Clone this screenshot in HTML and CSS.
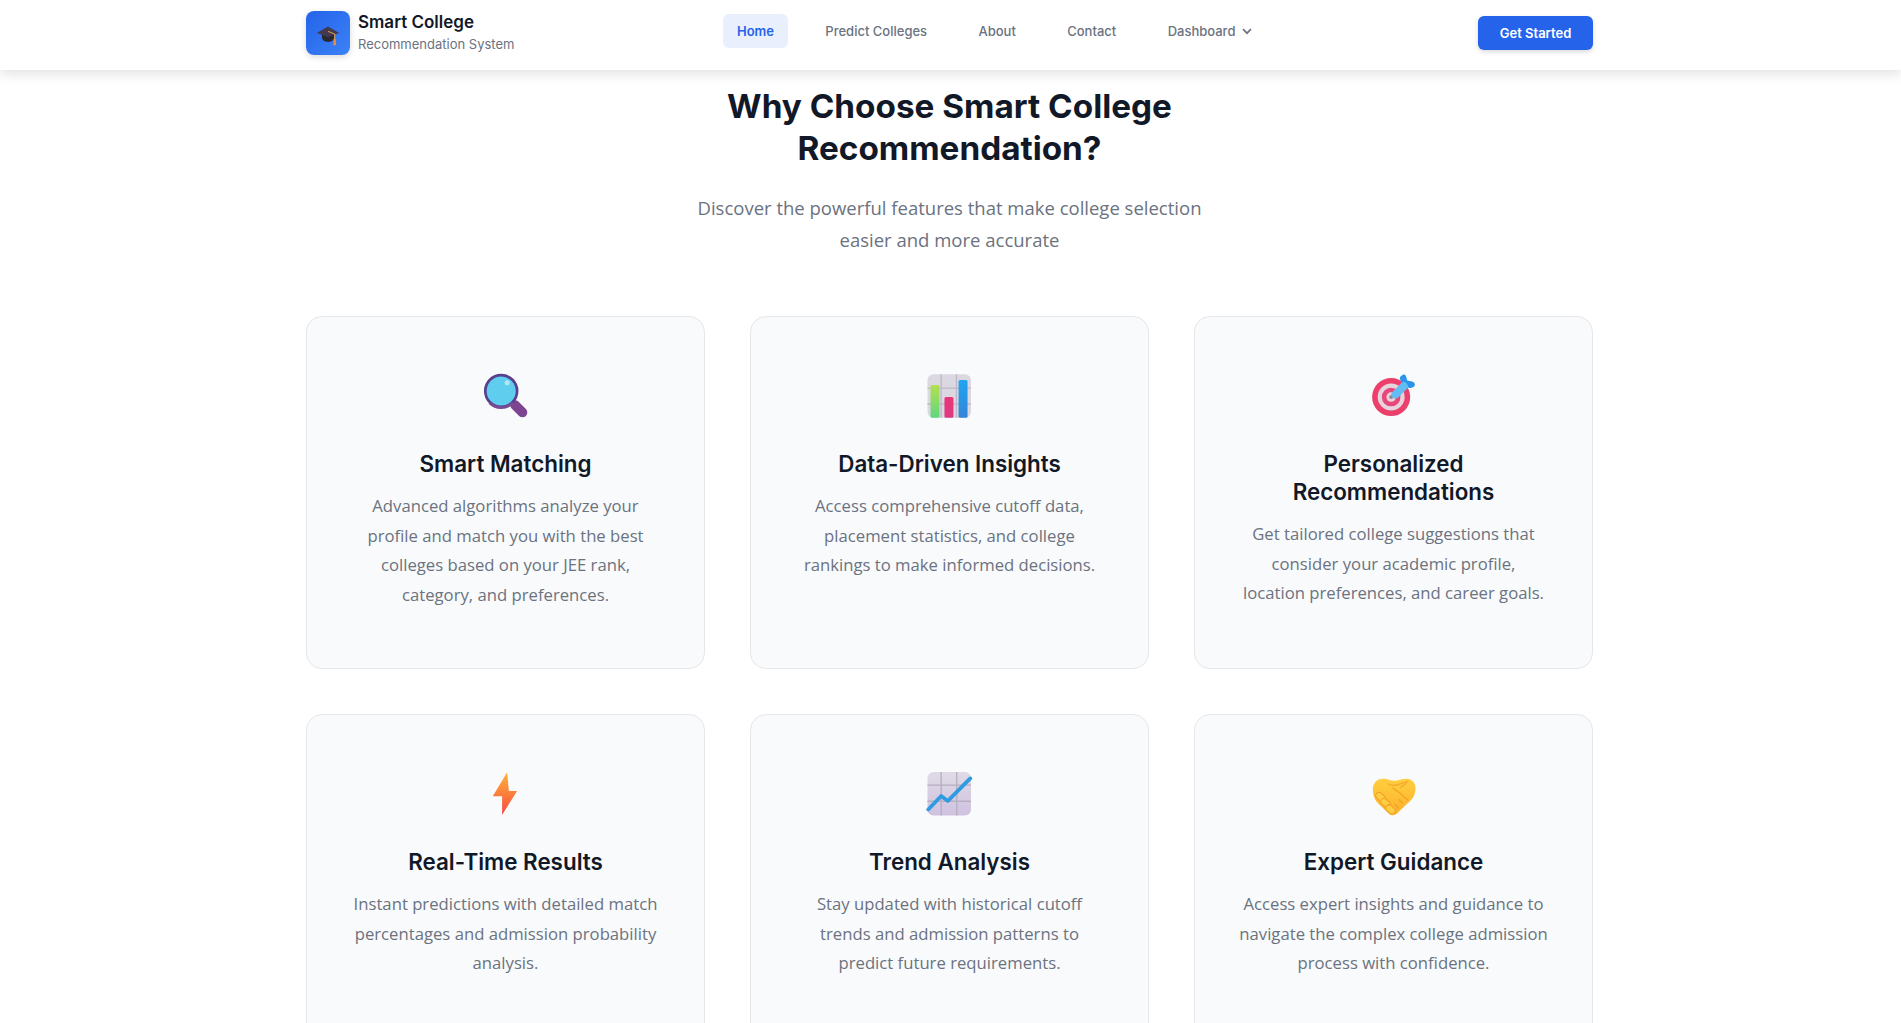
FILE: index.html
```html
<!DOCTYPE html>
<html lang="en">
<head>
    <meta charset="UTF-8">
    <meta name="viewport" content="width=device-width, initial-scale=1.0">
    <title>Smart College Recommendation System</title>
    <link rel="stylesheet" href="styles.css">
</head>
<body>
    <!-- Top navigation -->
    <header class="navbar">
        <div class="navbar-inner">
            <a class="brand" href="#">
                <span class="brand-logo">
                    <svg class="brand-cap" viewBox="0 0 32 32">
                        <path d="M8 14h16v7c0 3-3.500 5.500-8 5.500S8 24 8 21z" fill="#2b2733"/>
                        <path d="M16 6 31 14.500 16 20 1 14.500z" fill="#433a52"/>
                        <path d="M16 12.500 25 16v7" fill="none" stroke="#e8a33d" stroke-width="1.300"/>
                        <path d="M23.700 22.500h2.600l.7 8.500h-4z" fill="#f08a3c"/>
                    </svg>
                </span>
                <span class="brand-text">
                    <span class="brand-name">Smart College</span>
                    <span class="brand-sub">Recommendation System</span>
                </span>
            </a>
            <nav class="nav-links">
                <a class="nav-link active" href="#">Home</a>
                <a class="nav-link" href="#">Predict Colleges</a>
                <a class="nav-link" href="#">About</a>
                <a class="nav-link" href="#">Contact</a>
                <a class="nav-link" href="#">Dashboard
                    <svg class="chevron" viewBox="0 0 12 12"><path d="M2 4.200 6 8.200l4-4" fill="none" stroke="currentColor" stroke-width="1.700"/></svg>
                </a>
            </nav>
            <button class="btn-start">Get Started</button>
        </div>
    </header>

    <main class="features">
        <div class="features-head">
            <h1>Why Choose Smart College Recommendation?</h1>
            <p>Discover the powerful features that make college selection easier and more accurate</p>
        </div>

        <div class="feature-grid">
            <article class="feature-card">
                <svg class="feature-icon" viewBox="0 0 32 32">
                    <path d="M22 22 27 27" stroke="#7d4490" stroke-width="6.400" stroke-linecap="round"/>
                    <circle cx="12.800" cy="12.700" r="10.600" fill="#5fcdee" stroke="#59408f" stroke-width="1.800"/>
                    <path d="M5 20.500a10.800 10.800 0 0 0 15.500 0" fill="none" stroke="#7a4a94" stroke-width="1.800"/>
                    <circle cx="16.800" cy="7.200" r="1.700" fill="#b6e6f6"/>
                </svg>
                <h3>Smart Matching</h3>
                <p>Advanced algorithms analyze your profile and match you with the best colleges based on your JEE rank, category, and preferences.</p>
            </article>

            <article class="feature-card">
                <svg class="feature-icon" viewBox="0 0 32 32">
                    <defs>
                        <linearGradient id="greenBar" x1="0" y1="0" x2="0" y2="1"><stop offset="0" stop-color="#b4e04e"/><stop offset="1" stop-color="#5fd67f"/></linearGradient>
                        <linearGradient id="pinkBar" x1="0" y1="0" x2="0" y2="1"><stop offset="0" stop-color="#e9357a"/><stop offset="1" stop-color="#df3a80"/></linearGradient>
                        <linearGradient id="blueBar" x1="0" y1="0" x2="0" y2="1"><stop offset="0" stop-color="#20a4f3"/><stop offset="1" stop-color="#3585d6"/></linearGradient>
                    </defs>
                    <rect x="1" y="1.500" width="29" height="29" rx="4" fill="#dcd8e2"/>
                    <path d="M10.100 1.500v29M20.300 1.500v29M1 10.700h29M1 21.300h29" stroke="#bdb8c6" stroke-width=".9"/>
                    <rect x="3" y="8.700" width="6" height="21.800" rx="1" fill="url(#greenBar)"/>
                    <rect x="12.300" y="16.700" width="6" height="13.800" rx="1" fill="url(#pinkBar)"/>
                    <rect x="21.700" y="5.300" width="6" height="25.200" rx="1" fill="url(#blueBar)"/>
                </svg>
                <h3>Data-Driven Insights</h3>
                <p>Access comprehensive cutoff data, placement statistics, and college rankings to make informed decisions.</p>
            </article>

            <article class="feature-card">
                <svg class="feature-icon" viewBox="0 0 32 32">
                    <circle cx="14.100" cy="16.700" r="12.700" fill="#ec3f6b"/>
                    <circle cx="14.100" cy="16.700" r="9" fill="#e6d3dc"/>
                    <circle cx="14.100" cy="16.700" r="6.200" fill="#e8477b"/>
                    <circle cx="14.100" cy="16.700" r="3.200" fill="#e6d3dc"/>
                    <circle cx="14.100" cy="16.700" r="1.300" fill="#8d8a96"/>
                    <path d="M21.200 2.300c1-1 2.300-.8 2.800.4l.8 3 3.200.6c1.300.3 2.500 1.700 1.700 2.900-.7 1-1.900 1.700-3.200 1.400l-4.600-1.300-1.800-4.300c-.4-1.100-.3-1.900 1.100-2.700z" fill="#2b95ea"/>
                    <path d="M17 15 22.500 9.500" stroke="#62bdf3" stroke-width="5.400" stroke-linecap="round"/>
                </svg>
                <h3>Personalized Recommendations</h3>
                <p>Get tailored college suggestions that consider your academic profile, location preferences, and career goals.</p>
            </article>

            <article class="feature-card">
                <svg class="feature-icon" viewBox="0 0 32 32">
                    <defs>
                        <linearGradient id="boltGrad" x1="0" y1="0" x2="0" y2="1"><stop offset="0" stop-color="#fdb13c"/><stop offset=".55" stop-color="#fb7a3c"/><stop offset="1" stop-color="#f2494c"/></linearGradient>
                    </defs>
                    <path d="M16.800 1.500 7.200 17.500h6.200v12.500L23.400 14h-5.500z" fill="url(#boltGrad)"/>
                </svg>
                <h3>Real-Time Results</h3>
                <p>Instant predictions with detailed match percentages and admission probability analysis.</p>
            </article>

            <article class="feature-card">
                <svg class="feature-icon" viewBox="0 0 32 32">
                    <defs>
                        <linearGradient id="gridGrad" x1="0" y1="0" x2="0" y2="1"><stop offset="0" stop-color="#e0dae6"/><stop offset="1" stop-color="#cfc2e0"/></linearGradient>
                    </defs>
                    <g transform="translate(0 .8)">
                        <rect x="1" y=".5" width="29" height="29" rx="4" fill="url(#gridGrad)"/>
                        <path d="M10.100 .5v29M20.500 .5v29M1 9.300h29M1 20h29" stroke="#b7b0c0" stroke-width=".9"/>
                        <path d="M1.500 25.500 10.100 16.500 14.600 19.800 29.500 4.800" fill="none" stroke="#2f9be2" stroke-width="2.500" stroke-linecap="round" stroke-linejoin="round"/>
                    </g>
                </svg>
                <h3>Trend Analysis</h3>
                <p>Stay updated with historical cutoff trends and admission patterns to predict future requirements.</p>
            </article>

            <article class="feature-card">
                <svg class="feature-icon" viewBox="0 0 32 32">
                    <defs>
                        <linearGradient id="handGrad" x1="0" y1="0" x2="0" y2="1"><stop offset="0" stop-color="#ffcf3f"/><stop offset="1" stop-color="#fdb02c"/></linearGradient>
                    </defs>
                    <g transform="translate(0 .8)">
                        <path d="M8.500 5c3.500 0 5 1.300 7.500 1.300S21 5 24.500 5c3.500 0 5.800 2.800 5.800 6.300 0 3.800-1.500 6.500-3.500 8.500l-7.500 7c-2 2.500-4.500 3.200-6.500 1.700L5 21c-2-2-3.100-5.500-3.100-9 0-4 2.800-7 6.600-7z" fill="url(#handGrad)"/>
                        <path d="M12 8.500c2.500 1.400 6 1 9-.3 1.500-.6 3-1.300 4-1.300-1.300 1.800-3.300 3.400-5 4" fill="none" stroke="#f5ad30" stroke-width="1"/>
                        <path d="M15 11c4 2.500 7 5 10.500 8.500M22 21.500l-2.800-2.700M19 24.500l-2.500-2.500" fill="none" stroke="#f2a226" stroke-width=".9"/>
                        <g fill="#ffcd42" stroke="#f0a02a" stroke-width=".7">
                            <rect x="3.500" y="15" width="7" height="4.400" rx="2.200" transform="rotate(42 7 17.200)"/>
                            <rect x="6.800" y="19" width="7" height="4.400" rx="2.200" transform="rotate(42 10.300 21.200)"/>
                            <rect x="10.200" y="23.300" width="7" height="4.400" rx="2.200" transform="rotate(42 13.700 25.500)"/>
                        </g>
                    </g>
                </svg>
                <h3>Expert Guidance</h3>
                <p>Access expert insights and guidance to navigate the complex college admission process with confidence.</p>
            </article>
        </div>
    </main>
</body>
</html>
```

FILE: styles.css
```css
* {
    box-sizing: border-box;
}
html, body {
    height: 100%;
    overflow: hidden;
}
body {
    margin: 0;
    background-color: #fff;
    font-family: "Open Sans", sans-serif;
    color: #111827;
}

/* navbar */
.navbar {
    position: relative;
    z-index: 10;
    height: 70px;
    background-color: #fff;
    box-shadow: 0 4px 12px rgba(0, 0, 0, 0.12);
}
.navbar-inner {
    width: 1287px;
    height: 100%;
    margin-left: 306px;
    display: flex;
    align-items: center;
    justify-content: space-between;
}
.brand {
    display: flex;
    align-items: center;
    gap: 8px;
    text-decoration: none;
    margin-top: -4px;
}
.brand-logo {
    width: 44px;
    height: 44px;
    border-radius: 8px;
    display: flex;
    align-items: center;
    justify-content: center;
    background: linear-gradient(135deg, #2563eb, #3b82f6);
    box-shadow: 0 2px 6px rgba(0, 0, 0, 0.15);
}
.brand-cap {
    width: 24px;
    height: 24px;
    margin-top: 2px;
}
.brand-text {
    display: flex;
    flex-direction: column;
    margin-top: -2px;
    font-family: Inter, sans-serif;
}
.brand-name {
    font-size: 17px;
    font-weight: 600;
    line-height: 24px;
    color: #111827;
}
.brand-sub {
    font-size: 13px;
    line-height: 20px;
    color: #6b7280;
}
.nav-links {
    display: flex;
    align-items: center;
    gap: 23.4px;
    margin-top: -9px;
    margin-right: 2px;
}
.nav-link {
    display: flex;
    align-items: center;
    gap: 6px;
    padding: 8px 14px;
    border-radius: 6px;
    font-family: Inter, sans-serif;
    font-size: 13px;
    font-weight: 500;
    line-height: 18px;
    color: #6b7280;
    text-decoration: none;
}
.nav-link.active {
    color: #2563eb;
    background-color: #e9effd;
    font-weight: 600;
}
.chevron {
    width: 12px;
    height: 12px;
}
.btn-start {
    width: 115px;
    height: 34px;
    margin-top: -5px;
    border: none;
    border-radius: 6px;
    background-color: #2563eb;
    color: #fff;
    font-family: Inter, sans-serif;
    font-size: 13px;
    font-weight: 600;
    box-shadow: 0 2px 5px rgba(0, 0, 0, 0.15);
    cursor: pointer;
}

/* features */
.features {
    width: 1287px;
    margin-left: 306px;
    padding-top: 15px;
}
.features-head {
    width: 520px;
    margin: 0 auto 60px;
    text-align: center;
}
.features-head h1 {
    margin: 0 0 23px;
    font-family: Inter, sans-serif;
    font-size: 33.3px;
    font-weight: 700;
    line-height: 42px;
    color: #111827;
}
.features-head p {
    margin: 0;
    font-size: 18.5px;
    line-height: 32px;
    color: #6b7280;
}
.feature-grid {
    display: grid;
    grid-template-columns: repeat(3, 1fr);
    gap: 45px;
}
.feature-card {
    height: 353px;
    padding: 55px 44px 40px;
    background-color: #f9fafb;
    border: 1px solid #e5e7eb;
    border-radius: 16px;
    text-align: center;
}
.feature-icon {
    display: block;
    width: 48px;
    height: 48px;
    margin: 0 auto 30px;
}
.feature-card h3 {
    margin: 0 0 13px;
    font-family: Inter, sans-serif;
    font-size: 22.4px;
    font-weight: 600;
    line-height: 28px;
    color: #111827;
}
.feature-card p {
    margin: 0;
    font-size: 16.7px;
    line-height: 29.5px;
    color: #6b7280;
}
```
